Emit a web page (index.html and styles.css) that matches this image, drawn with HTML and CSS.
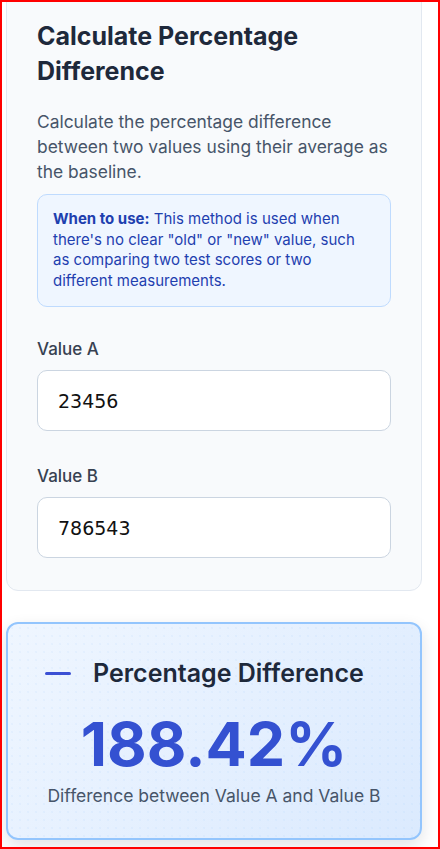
FILE: index.html
```html
<!DOCTYPE html>
<html>
<head>
  <meta charset="utf-8">
  <link rel="stylesheet" href="styles.css">
</head>
<body>
  <div class="frame">
    <div class="page">
      <div class="card">
        <h2 class="card-title">Calculate Percentage Difference</h2>
        <p class="card-desc">Calculate the percentage difference between two values using their average as the baseline.</p>

        <div class="info-box">
          <strong>When to use:</strong> This method is used when there's no clear "old" or "new" value, such as comparing two test scores or two different measurements.
        </div>

        <div class="field">
          <label for="valueA">Value A</label>
          <input type="text" id="valueA" class="value-input" value="23456">
        </div>

        <div class="field">
          <label for="valueB">Value B</label>
          <input type="text" id="valueB" class="value-input" value="786543">
        </div>
      </div>

      <div class="result-card">
        <div class="result-header">
          <span class="result-icon"></span>
          <h3>Percentage Difference</h3>
        </div>
        <div class="result-value">188.42%</div>
        <div class="result-caption">Difference between Value A and Value B</div>
      </div>
    </div>
  </div>
</body>
</html>
```

FILE: styles.css
```css
html, body {
  margin: 0;
  padding: 0;
  background: white;
}

body {
  font-family: Inter, 'Noto Sans', sans-serif;
}

.frame {
  box-sizing: border-box;
  width: 440px;
  height: 849px;
  border: 2px solid #ff0000;
  overflow: hidden;
  background: white;
}

.page {
  margin-top: -14px;
  padding: 0 16px 0 4px;
}

.card {
  background: #f8fafc;
  border: 1px solid #e2e8f0;
  border-radius: 12px;
  padding: 30px 30px 32px;
}

.card-title {
  margin: 0 0 20px;
  font-size: 25px;
  line-height: 35px;
  font-weight: 700;
  color: #1e293b;
}

.card-desc {
  margin: 0 0 10px;
  font-size: 17.4px;
  line-height: 25px;
  color: #475569;
}

.info-box {
  background: #eff6ff;
  border: 1px solid #bfdbfe;
  border-radius: 10px;
  padding: 14px 15px 15px;
  font-size: 15px;
  line-height: 20.5px;
  color: #1e40af;
}

.info-box strong {
  font-weight: 700;
}

.field {
  margin-top: 32px;
}

.field + .field {
  margin-top: 35px;
}

.field label {
  display: block;
  margin-bottom: 11px;
  font-size: 17px;
  font-weight: 500;
  color: #374151;
}

.value-input {
  box-sizing: border-box;
  width: 100%;
  height: 61px;
  padding: 0 20px;
  border: 1px solid #cbd5e1;
  border-radius: 10px;
  background: white;
  font-family: 'DejaVu Sans', sans-serif;
  font-size: 19px;
  color: #111;
}

.result-card {
  margin-top: 31px;
  border: 2px solid #93c5fd;
  border-radius: 12px;
  background:
    radial-gradient(rgba(147, 197, 253, 0.2) 0.6px, transparent 0.8px) 0 0 / 8px 8px,
    linear-gradient(135deg, #eff6ff 0%, #dbeafe 100%);
  box-shadow: 0 6px 16px rgba(15, 23, 42, 0.12);
  padding: 32px 20px 30px;
  text-align: center;
}

.result-header {
  display: flex;
  align-items: center;
  gap: 22px;
  padding-left: 17px;
}

.result-icon {
  width: 26px;
  height: 3px;
  background: #3b50d4;
  border-radius: 2px;
}

.result-header h3 {
  margin: 0;
  font-size: 25px;
  line-height: 34px;
  font-weight: 600;
  color: #1e293b;
}

.result-value {
  margin-top: 18px;
  font-size: 61px;
  line-height: 72px;
  font-weight: 700;
  color: #3451d1;
}

.result-caption {
  margin-top: 4px;
  font-size: 17.5px;
  line-height: 24px;
  color: #475569;
}
```
